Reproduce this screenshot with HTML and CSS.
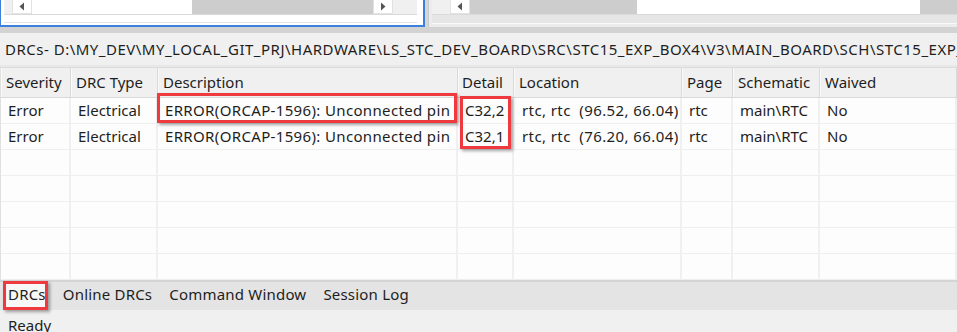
FILE: index.html
```html
<!DOCTYPE html>
<html>
<head>
<meta charset="utf-8">
<link rel="stylesheet" href="styles.css">
</head>
<body>
<div class="app">
  <div class="top">
    <div class="pane pane-left">
      <div class="hscroll">
        <div class="sbtn"><svg width="6" height="9" viewBox="0 0 6 9"><path d="M5 0.5 L0.5 4.5 L5 8.5 Z" fill="#555"/></svg></div>
        <div class="track"><div class="thumb thumb-left"></div></div>
        <div class="sbtn"><svg width="6" height="9" viewBox="0 0 6 9"><path d="M1 0.5 L5.5 4.5 L1 8.5 Z" fill="#555"/></svg></div>
        <div class="corner"></div>
      </div>
      <div class="pane-foot"></div>
    </div>
    <div class="divider"></div>
    <div class="pane pane-right">
      <div class="hscroll">
        <div class="sbtn"><svg width="6" height="9" viewBox="0 0 6 9"><path d="M5 0.5 L0.5 4.5 L5 8.5 Z" fill="#555"/></svg></div>
        <div class="track"><div class="thumb thumb-right"></div></div>
      </div>
      <div class="pane-foot"></div>
    </div>
  </div>
  <div class="splitter"></div>
  <div class="title">DRCs- D:\MY_DEV\MY_LOCAL_GIT_PRJ\HARDWARE\LS_STC_DEV_BOARD\SRC\STC15_EXP_BOX4\V3\MAIN_BOARD\SCH\STC15_EXP_BOX4.DSN</div>
  <div class="title-foot"></div>
  <div class="grid">
    <div class="hd">Severity</div>
    <div class="hd">DRC Type</div>
    <div class="hd">Description</div>
    <div class="hd hd-detail">Detail</div>
    <div class="hd">Location</div>
    <div class="hd">Page</div>
    <div class="hd">Schematic</div>
    <div class="hd">Waived</div>

    <div class="cell">Error</div>
    <div class="cell">Electrical</div>
    <div class="cell desc mark-host">ERROR(ORCAP-1596): Unconnected pin<span class="hl hl-desc"></span></div>
    <div class="cell detail mark-host">C32,2<span class="hl hl-detail"></span></div>
    <div class="cell loc">rtc, rtc  (96.52, 66.04)</div>
    <div class="cell">rtc</div>
    <div class="cell">main\RTC</div>
    <div class="cell">No</div>

    <div class="cell">Error</div>
    <div class="cell">Electrical</div>
    <div class="cell desc">ERROR(ORCAP-1596): Unconnected pin</div>
    <div class="cell detail">C32,1</div>
    <div class="cell loc">rtc, rtc  (76.20, 66.04)</div>
    <div class="cell">rtc</div>
    <div class="cell">main\RTC</div>
    <div class="cell">No</div>

    <div class="cell"></div><div class="cell"></div><div class="cell"></div><div class="cell"></div><div class="cell"></div><div class="cell"></div><div class="cell"></div><div class="cell"></div>
    <div class="cell"></div><div class="cell"></div><div class="cell"></div><div class="cell"></div><div class="cell"></div><div class="cell"></div><div class="cell"></div><div class="cell"></div>
    <div class="cell"></div><div class="cell"></div><div class="cell"></div><div class="cell"></div><div class="cell"></div><div class="cell"></div><div class="cell"></div><div class="cell"></div>
    <div class="cell"></div><div class="cell"></div><div class="cell"></div><div class="cell"></div><div class="cell"></div><div class="cell"></div><div class="cell"></div><div class="cell"></div>
    <div class="cell"></div><div class="cell"></div><div class="cell"></div><div class="cell"></div><div class="cell"></div><div class="cell"></div><div class="cell"></div><div class="cell"></div>
  </div>
  <div class="tabs">
    <div class="tab sel">DRCs<span class="hl hl-tab"></span></div>
    <div class="tab">Online DRCs</div>
    <div class="tab">Command Window</div>
    <div class="tab">Session Log</div>
  </div>
  <div class="status">Ready</div>
</div>
</body>
</html>
```
FILE: styles.css
```css
* { box-sizing: border-box; }
html, body { margin: 0; padding: 0; }
body {
  width: 957px;
  height: 332px;
  overflow: hidden;
  background: #f0f0f0;
  font-family: "Noto Sans", "Open Sans", sans-serif;
  font-size: 15px;
  color: #1e1e1e;
}
.app { width: 957px; height: 332px; overflow: hidden; }

/* top panes */
.top { display: flex; height: 27px; background: #d6d6d6; }
.pane { display: flex; flex-direction: column; }
.pane-left {
  width: 425px;
  background: #fff;
  border-left: 1px solid #3a80dc;
  border-right: 2px solid #3a80dc;
  border-bottom: 2px solid #3a80dc;
  padding: 0 6px 0 3px;
}
.pane-left .hscroll { background: #f0f0f0; padding-left: 8px; }
.hscroll { display: flex; height: 15px; border-bottom: 1px solid #dadada; }
.sbtn {
  width: 20px;
  height: 14px;
  background: #fff;
  border: 1px solid #e2e2e2;
  border-top: none;
  display: flex;
  align-items: center;
  justify-content: center;
  flex: none;
}
.track { flex: 1; background: #cdcdcd; display: flex; }
.thumb { background: #fff; height: 14px; }
.thumb-left { width: 160px; }
.thumb-right { margin-left: 167px; width: 283px; }
.corner { width: 24px; background: #f0f0f0; flex: none; }
.pane-foot { flex: 1; border-bottom: 1px solid #e3e3e3; margin-bottom: 2px; }
.divider { width: 3px; background: #d6d6d6; }
.pane-right {
  flex: 1;
  background: #ececec;
  border-left: 1px solid #c8c8c8;
  padding-left: 3px;
}
.pane-right .hscroll { background: #f0f0f0; padding-left: 18px; }
.pane-right .pane-foot { border-bottom: 1px solid #fafafa; background: #e6e6e6; margin-bottom: 3px; }

.splitter { height: 6px; background: #d3d3d3; }

.title {
  height: 32px;
  line-height: 33px;
  padding-left: 5px;
  white-space: nowrap;
  overflow: hidden;
  letter-spacing: 0.5px;
  background: #f0f0f0;
}
.title-foot { height: 3px; background: #e8e8e8; border-bottom: 1px solid #dcdcdc; }

/* grid */
.grid {
  display: grid;
  grid-template-columns: 70px 87px 300px 56px 168px 51px 87px 1fr;
  grid-template-rows: 30px;
  grid-auto-rows: 26px;
  border-left: 1px solid #e0e0e0;
  background: #fdfdfd;
}
.hd {
  background: #f0f0f0;
  border-right: 1px solid #d9d9d9;
  border-bottom: 1px solid #d9d9d9;
  box-shadow: inset 1px 0 0 #fafafa;
  padding-left: 5px;
  line-height: 28px;
  white-space: nowrap;
  overflow: hidden;
}
.hd-detail { padding-left: 4px; }
.cell {
  border-right: 2px solid #f0f0f0;
  border-bottom: 1px solid #efefef;
  padding-left: 7px;
  line-height: 25px;
  white-space: nowrap;
}
.cell.desc { letter-spacing: 0.35px; }
.cell.detail { padding-left: 7px; }
.cell.loc { white-space: pre; padding-left: 8px; letter-spacing: 0.4px; }
.mark-host { position: relative; }

.hl {
  position: absolute;
  border: 3px solid #ee3a3f;
  box-shadow: 2px 2px 3px rgba(0, 0, 0, 0.35);
  pointer-events: none;
}
.hl-desc { left: -1px; top: -5px; width: 300px; height: 30px; }
.hl-detail { left: 2px; top: -2px; width: 51px; height: 53px; }

/* tabs */
.tabs {
  display: flex;
  height: 30px;
  background: #e4e4e4;
  border-top: 2px solid #d4d4d4;
  padding-left: 8px;
  gap: 17px;
  letter-spacing: 0.2px;
}
.tab { line-height: 24px; white-space: nowrap; position: relative; }
.tab.sel {
  margin-left: -5px;
  margin-right: -2px;
  padding: 0 2px 0 5px;
  background: #f7f7f7;
}
.hl-tab { left: 0; top: -1px; right: 0; bottom: 0; }

.status {
  height: 22px;
  line-height: 30px;
  padding-left: 8px;
  background: #f0f0f0;
  overflow: hidden;
}
```
